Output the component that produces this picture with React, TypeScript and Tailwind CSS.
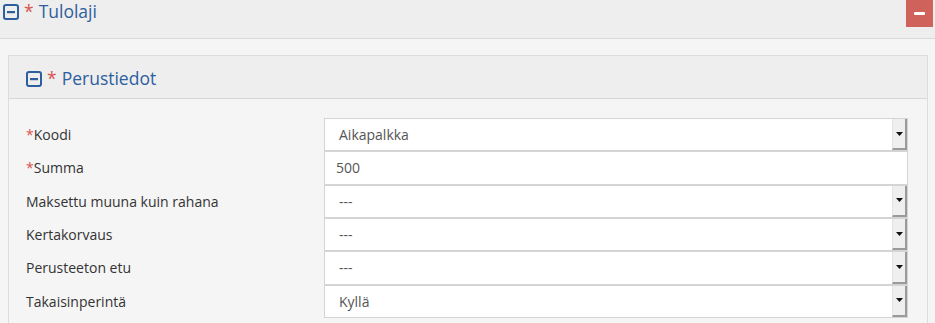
import React from 'react';

const MinusBox: React.FC<{ size: number }> = ({ size }) => (
    <svg width={size} height={size} viewBox="0 0 16 16" className="shrink-0">
        <rect x="1" y="1" width="14" height="14" rx="2" fill="none" stroke="#2d5e9e" strokeWidth="2" />
        <rect x="4" y="7" width="8" height="2.2" fill="#2d5e9e" />
    </svg>
);

interface FieldProps {
    label: string;
    value: string;
    required?: boolean;
    select?: boolean;
}

const Field: React.FC<FieldProps> = ({ label, value, required, select }) => (
    <div className="flex items-center h-[33.33px]">
        <div className="w-[298px] text-[14px] text-[#333]">
            {required && <span className="text-[#d9534f]">*</span>}
            {label}
        </div>
        <div className="relative flex-1 h-full bg-white border border-[#d4d4d4] flex items-center">
            <span className={`text-[14px] text-[#555] ${select ? 'pl-[14px]' : 'pl-[11px]'}`}>{value}</span>
            {select && (
                // old style dropdown arrow button
                <div className="absolute right-0 top-0 bottom-0 w-[15px] bg-[#efefef] border-l border-[#e4e4e4] border-r-2 border-b-2 border-r-[#9a9a9a] border-b-[#9a9a9a] flex items-center justify-center">
                    <svg width="7" height="4" viewBox="0 0 7 4">
                        <path d="M0 0 L7 0 L3.5 4 Z" fill="#111" />
                    </svg>
                </div>
            )}
        </div>
    </div>
);

export default function App() {
    const fields: FieldProps[] = [
        { label: 'Koodi', value: 'Aikapalkka', required: true, select: true },
        { label: 'Summa', value: '500', required: true },
        { label: 'Maksettu muuna kuin rahana', value: '---', select: true },
        { label: 'Kertakorvaus', value: '---', select: true },
        { label: 'Perusteeton etu', value: '---', select: true },
        { label: 'Takaisinperintä', value: 'Kyllä', select: true }
    ];

    return (
        <div className="w-[935px] h-[323px] overflow-hidden bg-[#f5f5f5] font-['Open_Sans',sans-serif]">
            {/* Top section header */}
            <div className="h-[39px] bg-[#eeeeee] border-b border-[#d9d9d9] flex items-start justify-between">
                <div className="flex items-center gap-[5px] pl-[3px] pt-[2px] h-[22px]">
                    <MinusBox size={16} />
                    <span className="text-[#d9534f] text-[17.5px] leading-none">*</span>
                    <span className="text-[#2d5e9e] text-[17.5px] leading-none">Tulolaji</span>
                </div>
                <button className="w-[27px] h-[27px] mr-[2px] bg-[#cf625a] flex items-center justify-center">
                    <span className="block w-[11px] h-[3px] bg-white rounded-[1px]" />
                </button>
            </div>

            {/* Inner panel */}
            <div className="mt-[16px] ml-[8px] w-[920px] border border-[#dcdcdc]">
                <div className="h-[43px] bg-[#eeeeee] border-b border-[#d6d6d6] flex items-center gap-[5px] pl-[17px] pt-[3px]">
                    <MinusBox size={16} />
                    <span className="text-[#d9534f] text-[17.5px] leading-none">*</span>
                    <span className="text-[#2d5e9e] text-[17.5px] leading-none">Perustiedot</span>
                </div>
                <div className="pt-[19px] pl-[17px] pr-[19px] pb-4">
                    {fields.map((f, i) => (
                        <Field key={i} {...f} />
                    ))}
                </div>
            </div>
        </div>
    );
}
